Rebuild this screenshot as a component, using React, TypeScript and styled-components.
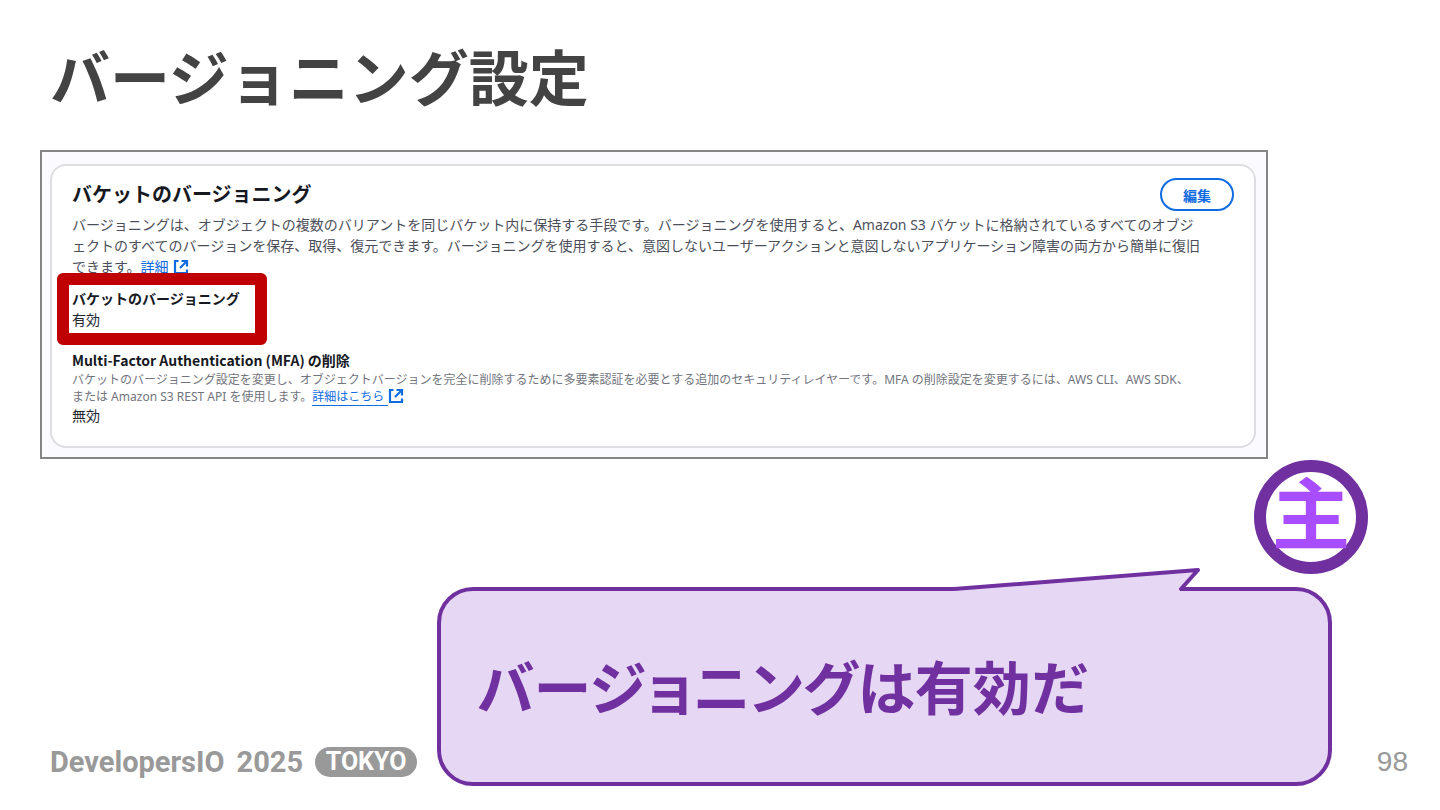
import React from "react";
import styled, { createGlobalStyle } from "styled-components";

const GlobalStyle = createGlobalStyle`
  *, *::before, *::after { box-sizing: border-box; }
  body {
    margin: 0;
    background: #ffffff;
    font-family: "Noto Sans", "Noto Sans CJK JP", sans-serif;
  }
  h1, h2, h3, p { margin: 0; }
`;

const Slide = styled.main`
  display: flex;
  flex-direction: column;
  min-height: 100vh;
  padding: 45px 0 24px 40px;
`;

const SlideTitle = styled.h1`
  padding-left: 10px;
  margin-bottom: 45px;
  font-family: "Noto Sans CJK JP", sans-serif;
  font-size: 60px;
  line-height: 60px;
  font-weight: 700;
  color: #434343;
`;

const Frame = styled.section`
  margin-right: 172px;
  padding: 12px 10px 9px 8px;
  border: 2px solid #858585;
  background: #fafaff;
`;

const Card = styled.div`
  padding: 12px 20px 20px;
  border: 2px solid #dedee2;
  border-radius: 16px;
  background: #ffffff;
`;

const CardHeader = styled.header`
  display: flex;
  align-items: center;
  justify-content: space-between;
  margin-bottom: 3px;
`;

const CardTitle = styled.h2`
  font-size: 20px;
  line-height: 24px;
  font-weight: 700;
  color: #16191f;
`;

const EditButton = styled.button`
  width: 74px;
  height: 33px;
  padding: 0;
  border: 2px solid #0f6be0;
  border-radius: 17px;
  background: #ffffff;
  font-family: "Noto Sans CJK JP", sans-serif;
  font-size: 14px;
  line-height: 28px;
  font-weight: 700;
  color: #0f6be0;
`;

const Description = styled.p<{ $small?: boolean }>`
  font-size: ${(p) => (p.$small ? 12 : 14)}px;
  line-height: ${(p) => (p.$small ? 17 : 21)}px;
  color: ${(p) => (p.$small ? "#72747e" : "#4c4f5a")};
`;

const Line = styled.span`
  display: block;
  white-space: nowrap;
`;

const DocLink = styled.a<{ $underlined?: boolean }>`
  color: #0f6be0;
  text-decoration: none;

  span {
    padding-right: 4px;
    border-bottom: ${(p) => (p.$underlined ? "1px solid #0f6be0" : "none")};
  }

  svg {
    width: 16px;
    height: 16px;
    vertical-align: -3px;
  }
`;

const Field = styled.div<{ $highlighted?: boolean }>`
  position: relative;
  width: ${(p) => (p.$highlighted ? "180px" : "auto")};
  margin-top: ${(p) => (p.$highlighted ? 11 : 20)}px;

  &::after {
    content: "";
    display: ${(p) => (p.$highlighted ? "block" : "none")};
    position: absolute;
    inset: -15px;
    border: 12px solid #c00000;
    border-radius: 6px;
  }
`;

const FieldName = styled.h3`
  font-family: "Noto Sans CJK JP", sans-serif;
  font-size: 14px;
  line-height: 21px;
  font-weight: 700;
  color: #16191f;
`;

const FieldValue = styled.p`
  font-size: 14px;
  line-height: 21px;
  color: #23262e;
`;

const RoleBadge = styled.div`
  display: flex;
  align-items: center;
  justify-content: center;
  align-self: flex-end;
  width: 114px;
  height: 114px;
  margin: 1px 72px 13px 0;
  padding-bottom: 14px;
  border: 12px solid #7030a0;
  border-radius: 50%;
  font-family: "Noto Sans CJK JP", sans-serif;
  font-size: 78px;
  line-height: 78px;
  font-weight: 700;
  color: #a84dff;
`;

const BottomRow = styled.footer`
  display: flex;
  flex: 1;
  align-items: flex-end;
`;

const Brand = styled.div`
  display: flex;
  flex: none;
  align-items: center;
  width: 397px;
  height: 30px;
  margin-bottom: 9px;
  padding-left: 10px;
  gap: 12px;
  font-family: Roboto, sans-serif;
  font-size: 29px;
  line-height: 30px;
  font-weight: 700;
  color: #999999;
`;

const CityPill = styled.span`
  width: 102px;
  border-radius: 15px;
  background: #999999;
  font-size: 25px;
  text-align: center;
  color: #ffffff;
`;

const Bubble = styled.div`
  position: relative;
  display: flex;
  flex: 1;
  align-items: center;
  align-self: stretch;
  min-height: 199px;
  padding: 0 36px 4px;
  border: 4px solid #7030a0;
  border-radius: 36px;
  background: #e6d8f4;
`;

const BubbleTail = styled.svg`
  position: absolute;
  top: -24px;
  right: 126px;
  width: 252px;
  height: 26px;
`;

const BubbleText = styled.p`
  font-family: "Noto Sans CJK JP", sans-serif;
  font-size: 58px;
  line-height: 72px;
  font-weight: 700;
  font-feature-settings: "palt";
  white-space: nowrap;
  color: #7030a0;
`;

const PageNumber = styled.span`
  flex: none;
  width: 108px;
  margin-bottom: 9px;
  padding-right: 32px;
  font-family: "Liberation Sans", sans-serif;
  font-size: 28px;
  line-height: 30px;
  text-align: right;
  color: #999999;
`;

const ExternalIcon = () => (
  <svg viewBox="0 0 16 16" fill="none" stroke="currentColor" strokeWidth="2.2" aria-hidden="true">
    <path d="M5.5 2H2v12h12v-3.5" />
    <path d="M8.5 2H14v5.5" />
    <path d="M14 2L7 9" />
  </svg>
);

export default function App() {
  return (
    <>
      <GlobalStyle />
      <Slide lang="ja">
        <SlideTitle>バージョニング設定</SlideTitle>

        <Frame>
          <Card>
            <CardHeader>
              <CardTitle>バケットのバージョニング</CardTitle>
              <EditButton type="button">編集</EditButton>
            </CardHeader>
            <Description>
              <Line>
                バージョニングは、オブジェクトの複数のバリアントを同じバケット内に保持する手段です。バージョニングを使用すると、Amazon S3 バケットに格納されているすべてのオブジ
              </Line>
              <Line>
                ェクトのすべてのバージョンを保存、取得、復元できます。バージョニングを使用すると、意図しないユーザーアクションと意図しないアプリケーション障害の両方から簡単に復旧
              </Line>
              <Line>
                できます。
                <DocLink href="#versioning">
                  <span>詳細</span>
                  <ExternalIcon />
                </DocLink>
              </Line>
            </Description>

            <Field $highlighted>
              <FieldName>バケットのバージョニング</FieldName>
              <FieldValue>有効</FieldValue>
            </Field>

            <Field>
              <FieldName>Multi-Factor Authentication (MFA) の削除</FieldName>
              <Description $small>
                <Line>
                  バケットのバージョニング設定を変更し、オブジェクトバージョンを完全に削除するために多要素認証を必要とする追加のセキュリティレイヤーです。MFA の削除設定を変更するには、AWS CLI、AWS SDK、
                </Line>
                <Line>
                  または Amazon S3 REST API を使用します。
                  <DocLink href="#mfa-delete" $underlined>
                    <span>詳細はこちら</span>
                    <ExternalIcon />
                  </DocLink>
                </Line>
              </Description>
              <FieldValue>無効</FieldValue>
            </Field>
          </Card>
        </Frame>

        <RoleBadge>主</RoleBadge>

        <BottomRow>
          <Brand>
            <span>DevelopersIO</span>
            <span>2025</span>
            <CityPill>TOKYO</CityPill>
          </Brand>
          <Bubble>
            <BubbleTail viewBox="0 0 252 26" aria-hidden="true">
              <path d="M4 22L248 3L231 22V26H4Z" fill="#e6d8f4" />
              <path
                d="M4 22L248 3L231 22H240"
                fill="none"
                stroke="#7030a0"
                strokeWidth="4"
                strokeLinejoin="round"
              />
            </BubbleTail>
            <BubbleText>バージョニングは有効だ</BubbleText>
          </Bubble>
          <PageNumber>98</PageNumber>
        </BottomRow>
      </Slide>
    </>
  );
}
